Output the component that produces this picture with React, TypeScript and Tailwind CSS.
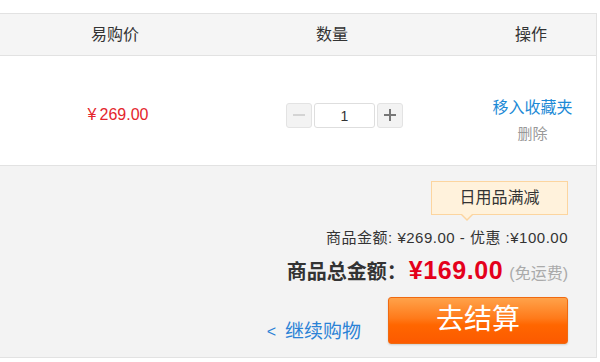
import React from "react";

export default function App() {
  return (
    <div
      className="w-[600px] h-[362px] bg-white pt-[13px] text-[#333]"
      style={{ fontFamily: '"Liberation Sans", "Noto Sans CJK SC", sans-serif' }}
    >
      <div className="w-[597px] border-r border-[#e2e2e2]">
        {/* header */}
        <div className="flex items-center h-[43px] bg-[#f5f5f5] border-t border-b border-[#e2e2e2] text-[16px]">
          <div className="w-[230px] text-center">易购价</div>
          <div className="w-[204px] text-center">数量</div>
          <div className="flex-1 text-center pl-[32px]">操作</div>
        </div>
        {/* item row */}
        <div className="flex items-center h-[110px] border-b border-[#e2e2e2] bg-white">
          <div className="w-[236px] text-center text-[16px] text-[#e4252d] pt-[8px]">
            <span className="mr-[3px]">¥</span>269.00
          </div>
          <div className="w-[233px] flex items-center pl-[50px] pt-[9px]">
            <div className="w-[26px] h-[25px] rounded-[3px] border border-[#e3e3e3] bg-[#f3f3f3] flex items-center justify-center">
              <div className="w-[12px] h-[2px] bg-[#d4d4d4]" />
            </div>
            <div className="ml-[2px] w-[61px] h-[25px] rounded-[3px] border border-[#dedede] bg-white flex items-center justify-center text-[14px] text-[#333] pt-[3px]">
              1
            </div>
            <div className="ml-[2px] w-[26px] h-[25px] rounded-[3px] border border-[#e3e3e3] bg-[#f3f3f3] flex items-center justify-center relative">
              <div className="w-[12px] h-[2px] bg-[#777]" />
              <div className="absolute w-[2px] h-[12px] bg-[#777]" />
            </div>
          </div>
          <div className="flex-1 flex flex-col items-center pt-[20px]">
            <span className="text-[16px] text-[#1c8ad6] leading-[18px]">移入收藏夹</span>
            <span className="text-[15px] text-[#999] leading-[18px] mt-[8px]">删除</span>
          </div>
        </div>
        {/* summary */}
        <div className="h-[192px] bg-[#f3f3f3] border-b border-[#e2e2e2] flex flex-col items-end pr-[28px]">
          <div className="relative mt-[15px] w-[137px] h-[34px] bg-[#fff2dc] border border-[#fcd59f] flex items-center justify-center text-[16px] text-[#333]">
            日用品满减
            <div className="absolute left-[28px] bottom-[-7px] w-0 h-0 border-l-[7px] border-r-[7px] border-t-[7px] border-l-transparent border-r-transparent border-t-[#fcd59f]" />
            <div className="absolute left-[29px] bottom-[-5px] w-0 h-0 border-l-[6px] border-r-[6px] border-t-[6px] border-l-transparent border-r-transparent border-t-[#fff2dc]" />
          </div>
          <div className="mt-[14px] text-[15px] text-[#333] leading-[18px] tracking-[0.5px]">
            商品金额: ¥269.00 - 优惠 :¥100.00
          </div>
          <div className="mt-[9px] flex items-baseline leading-[28px]">
            <span className="text-[20px] font-bold text-[#333]">商品总金额：</span>
            <span className="text-[25px] font-bold text-[#e4001b] ml-[2px] tracking-[0.6px]">¥169.00</span>
            <span className="text-[16px] text-[#aaa] ml-[6px]">(免运费)</span>
          </div>
          <div className="mt-[6px] flex items-center w-full justify-end">
            <div className="flex items-center text-[#2b82d6] text-[19px] mr-[27px] mt-[24px]">
              <span className="text-[16px] mr-[9px]">&lt;</span>
              <span>继续购物</span>
            </div>
            <div
              className="w-[180px] h-[47px] rounded-[3px] border border-[#f06a10] flex items-center justify-center text-white text-[28px] shadow-[0_1px_2px_rgba(0,0,0,0.15)]"
              style={{ background: "linear-gradient(#ffa24a, #ff7a1a 45%, #ff6600 60%, #fc5a00)" }}
            >
              去结算
            </div>
          </div>
        </div>
      </div>
    </div>
  );
}
